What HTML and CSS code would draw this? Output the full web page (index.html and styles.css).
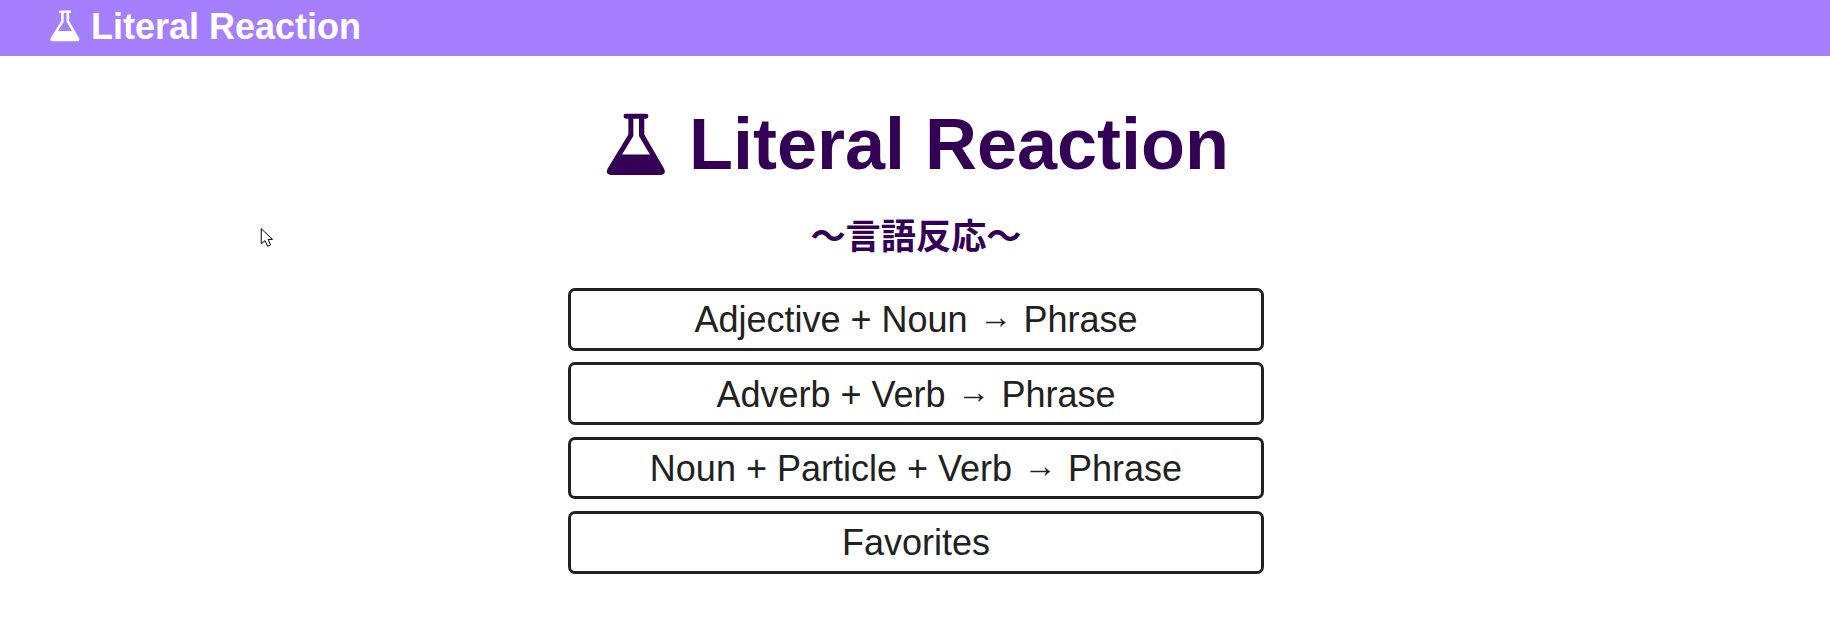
FILE: index.html
```html
<!DOCTYPE html>
<html>
<head>
  <title>Literal Reaction</title>
  <link rel="stylesheet" href="styles.css">
</head>
<body>
  <!-- Top bar -->
  <nav class="navbar">
    <svg class="flask flask-small" viewBox="18 23 180 190"><path fill-rule="evenodd" d="M78 25H138a7.5 7.5 0 0 1 0 15H133V88L192 190Q202 210 180 210H35Q13 210 23 190L85 88V40H78a7.5 7.5 0 0 1 0-15ZM100 40V92L66 148H150L117 92V40Z"/></svg>
    <span>Literal Reaction</span>
  </nav>
  <!-- Title and menu -->
  <main class="content">
    <h1 class="title">
      <svg class="flask flask-large" viewBox="18 23 180 190"><path fill-rule="evenodd" d="M78 25H138a7.5 7.5 0 0 1 0 15H133V88L192 190Q202 210 180 210H35Q13 210 23 190L85 88V40H78a7.5 7.5 0 0 1 0-15ZM100 40V92L66 148H150L117 92V40Z"/></svg>
      Literal Reaction
    </h1>
    <h2 class="subtitle">〜言語反応〜</h2>
    <div class="menu">
      <button class="menu-button">Adjective + Noun <span class="arrow">→</span> Phrase</button>
      <button class="menu-button">Adverb + Verb <span class="arrow">→</span> Phrase</button>
      <button class="menu-button">Noun + Particle + Verb <span class="arrow">→</span> Phrase</button>
      <button class="menu-button">Favorites</button>
    </div>
  </main>
  <!-- Mouse pointer caught in the screenshot -->
  <svg class="pointer" viewBox="0 0 12 16"><path d="M1 1V13L4 10.500L6 15L8.500 14L6.500 9.500H10Z"/></svg>
</body>
</html>
```

FILE: styles.css
```css
body {
  margin: 0;
  font-family: "Liberation Sans", "Noto Sans CJK JP", sans-serif;
  background: #fff;
  overflow: hidden;
}

/* Top bar */
.navbar {
  display: flex;
  align-items: center;
  gap: 11px;
  height: 53px;
  padding: 0 0 3px 50px;
  background: #a67fff;
  color: #fff;
  font-size: 36px;
  font-weight: bold;
}
.flask { fill: currentColor; }
.flask-small { width: 30px; height: 32px; margin-top: -1px; }
.flask-large { width: 60px; height: 63px; margin: -1px 23px 0 3px; }

/* Title */
.content {
  display: flex;
  flex-direction: column;
  align-items: center;
  padding-left: 2px;
}
.title {
  display: flex;
  align-items: center;
  margin: 47px 0 0;
  color: #330055;
  font-size: 72px;
  line-height: 83px;
}
.subtitle {
  margin: 27px 0 0;
  color: #330055;
  font-size: 35.2px;
  line-height: 48px;
}

/* Menu buttons */
.menu {
  display: flex;
  flex-direction: column;
  gap: 11.8px;
  width: 696px;
  margin-top: 27px;
}
.menu-button {
  height: 62.6px;
  padding: 1px 0 0;
  border: 3px solid #212121;
  border-radius: 7px;
  background: #fff;
  color: #212121;
  font-family: inherit;
  font-size: 36px;
  line-height: 41px;
}
.arrow { margin: 0 1.5px; font-size: 33px; vertical-align: 4px; line-height: 1; }

.pointer {
  position: absolute;
  left: 260px;
  top: 227px;
  width: 15px;
  height: 21px;
  fill: #fff;
  stroke: #000;
  stroke-width: 0.8;
}
```
